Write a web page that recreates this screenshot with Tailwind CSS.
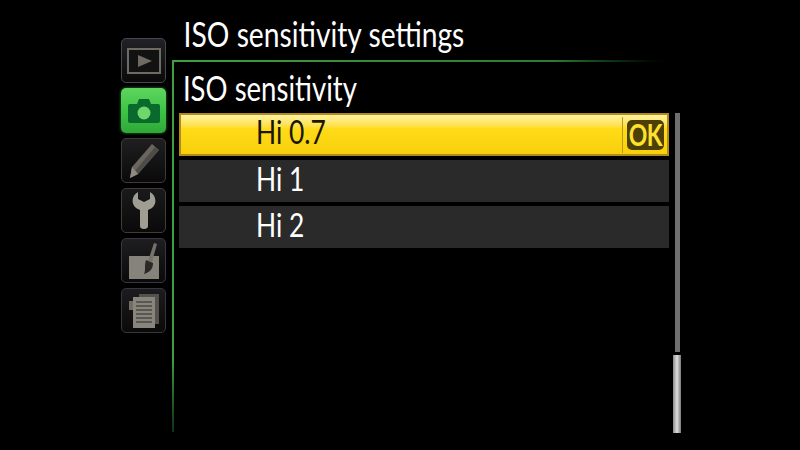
<!DOCTYPE html>
<html>
  <head>
    <meta charset="UTF-8" />
    <title>ISO sensitivity settings</title>
    <script src="https://cdn.jsdelivr.net/npm/@tailwindcss/browser@4"></script>
  </head>
  <body class="bg-black overflow-hidden">
    <div class="w-[800px] h-[450px] bg-black flex pl-[121px] font-['Lato',sans-serif] overflow-hidden">
      <!-- Menu tabs -->
      <nav class="w-[45px] pt-[38px] flex flex-col gap-[5px] shrink-0">
        <div class="h-[45px] rounded-[5px] border border-[#45484e] bg-gradient-to-b from-[#222226] to-[#0a0a0a] flex items-center justify-center">
          <svg width="34" height="26" viewBox="0 0 34 26">
            <rect x="1" y="1" width="32" height="24" fill="#121212" stroke="#6f6b64" stroke-width="2" />
            <path d="M11 7 L25 13 L11 19 Z" fill="#6f6b64" />
          </svg>
        </div>
        <div class="h-[45px] rounded-[5px] bg-gradient-to-b from-[#5fd45f] via-[#3cc545] to-[#2fa83a] shadow-[0_0_3px_#2a8f33] flex items-center justify-center">
          <svg width="32" height="26" viewBox="0 0 32 26">
            <path d="M0 8 Q0 6 2 6 H9 L11 1 H21 L23 6 H30 Q32 6 32 8 V23 Q32 25 30 25 H2 Q0 25 0 23 Z" fill="#0a6a2e" />
            <circle cx="16" cy="15" r="6.5" fill="#6ed86c" />
          </svg>
        </div>
        <div class="h-[45px] rounded-[5px] border border-[#40383c] bg-gradient-to-b from-[#1f1f21] to-[#0a0a0a] flex items-center justify-center">
          <svg width="32" height="36" viewBox="0 0 32 36">
            <path d="M24 1 L31 7 L10 31 L2 35 L4 24 Z" fill="#6a665f" />
            <path d="M27 4 L31 7 L10 31 L7 28 Z" fill="#4f4c47" />
            <path d="M4 24 L10 31 L2 35 Z" fill="#8f8b83" />
          </svg>
        </div>
        <div class="h-[45px] rounded-[5px] border border-[#423c34] bg-gradient-to-b from-[#1a1a1c] to-[#0a0a0a] flex items-center justify-center">
          <svg width="24" height="37" viewBox="0 0 24 37">
            <path d="M6 0 C0 3 -1 11 3 15 C5 17 7 17 8 18 V34 Q8 37 12 37 Q16 37 16 34 V18 C17 17 19 17 21 15 C25 11 24 3 18 0 V7 L12 10 L6 7 Z" fill="#a09d92" />
          </svg>
        </div>
        <div class="h-[45px] rounded-[5px] border border-[#3c3544] bg-gradient-to-b from-[#1e1e20] to-[#0a0a0a] flex items-center justify-center">
          <svg width="34" height="36" viewBox="0 0 34 36">
            <rect x="2" y="13" width="30" height="23" fill="#86837a" />
            <path d="M27 0 L30 1 L25 19 L21 18 Z" fill="#75716a" />
            <path d="M19 17 L26 20 C26 26 23 29 17 31 C19 27 17 23 19 17 Z" fill="#2a2927" />
          </svg>
        </div>
        <div class="h-[45px] rounded-[5px] border border-[#36363c] bg-gradient-to-b from-[#1c1c1e] to-[#0a0a0a] flex items-center justify-center">
          <svg width="32" height="36" viewBox="0 0 32 36">
            <rect x="11" y="1" width="20" height="30" fill="#55524d" />
            <rect x="1" y="8" width="6" height="9" fill="#716d66" />
            <rect x="5" y="4" width="22" height="31" fill="#88857d" />
            <path d="M8 9 H24 M8 13 H24 M8 17 H24 M8 21 H24 M8 25 H24 M8 29 H24" stroke="#4a4844" stroke-width="1.5" />
          </svg>
        </div>
      </nav>

      <!-- Settings panel -->
      <main class="ml-[6px] w-[520px] shrink-0">
        <h1 class="h-[60px] pl-[14px] pt-[12px] text-[34px] leading-[44px] text-white whitespace-nowrap origin-left scale-x-[.83]">ISO sensitivity settings</h1>
        <div class="flex h-[372px]">
          <div class="w-[2px] bg-gradient-to-b from-[#3f9f45] via-[#3f9f45] via-80% to-[#123016]"></div>
          <div class="flex-1 min-w-0">
            <div class="h-[2px] w-[508px] bg-gradient-to-r from-[#3f9f45] via-[#2d7a34] via-75% to-black"></div>
            <h2 class="h-[51px] pl-[11px] pt-[4px] text-[34px] leading-[44px] text-white whitespace-nowrap origin-left scale-x-[.81]">ISO sensitivity</h2>
            <div class="flex">
              <div class="ml-[5px] w-[490px] flex flex-col gap-[4px]">
                <div class="h-[43px] border-2 border-[#b08c18] bg-gradient-to-b from-[#fff2a0] via-[#ffdc17] via-35% to-[#f7cf0d] flex items-center justify-between pl-[75px] pr-[3px]">
                  <span class="pb-[6px] text-[33px] leading-none text-[#1a1600] origin-left scale-x-[.8]">Hi 0.7</span>
                  <div class="flex items-center h-full">
                    <div class="w-px h-[36px] bg-[#b69a1c]"></div>
                    <div class="ml-[4px] w-[37px] h-[30px] rounded-[5px] bg-[#4c4006] flex items-center justify-center text-[31px] leading-none font-bold text-[#ffe12e]"><span class="scale-x-[.74] tracking-tight">OK</span></div>
                  </div>
                </div>
                <div class="h-[42px] bg-[#2a2a2a] flex items-center pl-[77px] pb-[6px] text-[33px] leading-none text-white"><span class="origin-left scale-x-[.8]">Hi 1</span></div>
                <div class="h-[42px] bg-[#2a2a2a] flex items-center pl-[77px] pb-[6px] text-[33px] leading-none text-white"><span class="origin-left scale-x-[.8]">Hi 2</span></div>
              </div>
              <!-- Scrollbar -->
              <div class="ml-[4px] w-[8px] h-[320px] flex flex-col items-center">
                <div class="w-[5px] h-[239px] bg-[#6f6f6f]"></div>
                <div class="mt-[3px] w-[8px] h-[78px] bg-gradient-to-r from-[#8a8a8a] via-[#e0e0e0] to-[#7a7a7a]"></div>
              </div>
            </div>
          </div>
        </div>
      </main>
    </div>
  </body>
</html>
